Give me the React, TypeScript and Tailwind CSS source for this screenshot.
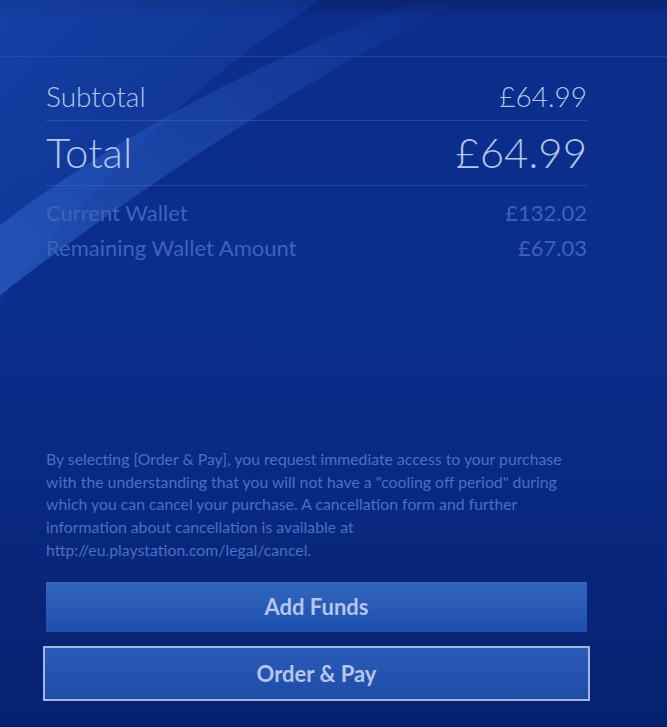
import React from 'react';

const disclaimer = [
  'By selecting [Order & Pay], you request immediate access to your purchase',
  'with the understanding that you will not have a "cooling off period" during',
  'which you can cancel your purchase. A cancellation form and further',
  'information about cancellation is available at',
  'http://eu.playstation.com/legal/cancel.',
];

function Backdrop() {
  return (
    <svg className="absolute inset-0 h-full w-full" viewBox="0 0 667 727" preserveAspectRatio="none">
      <defs>
        <linearGradient id="bg" x1="0" y1="0" x2="0" y2="1">
          <stop offset="0" stopColor="#0a2372" />
          <stop offset="0.025" stopColor="#0c2d8c" />
          <stop offset="0.45" stopColor="#0b2d8c" />
          <stop offset="1" stopColor="#072170" />
        </linearGradient>
        <linearGradient id="band" x1="0" y1="1" x2="1" y2="0">
          <stop offset="0" stopColor="#2b5fc4" stopOpacity="0.7" />
          <stop offset="0.6" stopColor="#2a5cc2" stopOpacity="0.35" />
          <stop offset="1" stopColor="#2a5cc2" stopOpacity="0" />
        </linearGradient>
        <linearGradient id="soft" x1="0" y1="0" x2="1" y2="1">
          <stop offset="0" stopColor="#1a4cb4" stopOpacity="0.6" />
          <stop offset="1" stopColor="#1a4cb4" stopOpacity="0" />
        </linearGradient>
      </defs>
      <rect width="667" height="727" fill="url(#bg)" />
      <path d="M0,0 L320,0 Q150,110 0,300 Z" fill="url(#soft)" />
      <path d="M0,225 Q170,95 420,0 L460,0 Q220,125 0,295 Z" fill="url(#band)" />
    </svg>
  );
}

export default function App() {
  return (
    <div
      className="relative h-[727px] w-full overflow-hidden"
      style={{ fontFamily: 'Lato, "Open Sans", sans-serif' }}
    >
      <Backdrop />
      <div className="relative flex flex-col">
        <div className="h-[57px] border-b border-[#3a5fb8]/40" />

        <div className="ml-[46px] mr-[80px]">
          <div className="flex h-[64px] items-center justify-between border-b border-[#4a6fc0]/40 pt-[14px] text-[28px] font-light leading-none text-[#b3c5e8]">
            <span>Subtotal</span>
            <span>£64.99</span>
          </div>
          <div className="flex h-[65px] items-center justify-between border-b border-[#4a6fc0]/40 pb-[3px] text-[42px] font-light leading-none text-[#b3c5e8]">
            <span>Total</span>
            <span>£64.99</span>
          </div>

          <div className="mt-[9px] text-[22px] leading-none text-[#3c63ba]">
            <div className="flex h-[35px] items-center justify-between">
              <span>Current Wallet</span>
              <span>£132.02</span>
            </div>
            <div className="flex h-[36px] items-center justify-between">
              <span>Remaining Wallet Amount</span>
              <span>£67.03</span>
            </div>
          </div>

          <div className="mt-[182px] text-[15.8px] leading-[22.7px] text-[#4a6fc4]">
            {disclaimer.map((line) => (
              <div key={line} className="whitespace-nowrap">{line}</div>
            ))}
          </div>

          <button className="mt-[20px] flex h-[50px] w-full items-center justify-center bg-gradient-to-b from-[#3465bd] to-[#1c4fae] text-[22px] font-bold text-[#b4c6ea]">
            Add Funds
          </button>
        </div>

        <div className="ml-[43px] mr-[77px] mt-[14px]">
          <button className="flex h-[55px] w-full items-center justify-center border-2 border-[#a2b6df] bg-gradient-to-b from-[#2b5bb8] to-[#1e4ca8] text-[22px] font-bold text-[#b4c6ea]">
            Order &amp; Pay
          </button>
        </div>
      </div>
    </div>
  );
}
